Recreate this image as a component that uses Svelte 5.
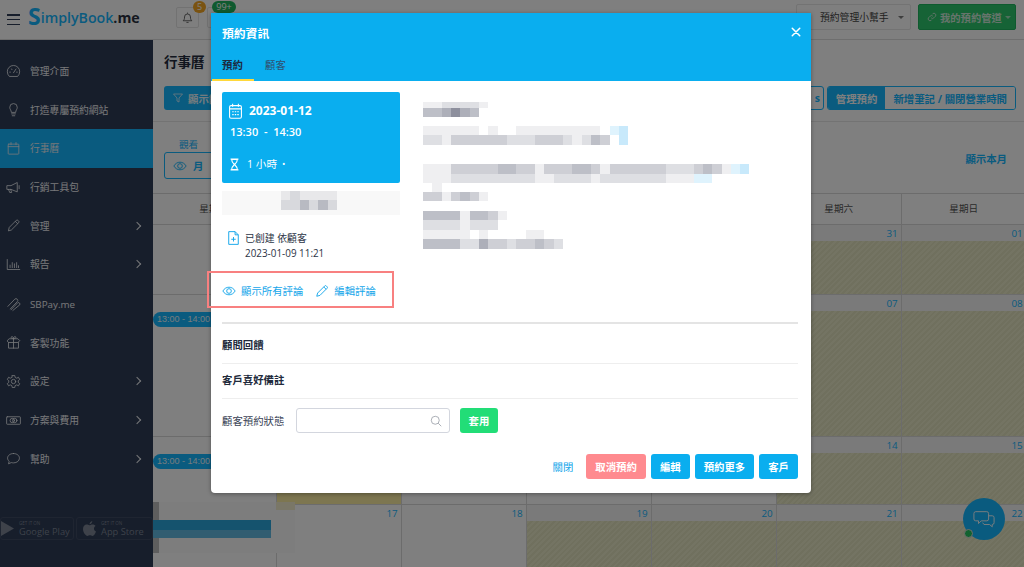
<script>
  const navItems = [
    { label: "管理介面", icon: "gauge" },
    { label: "打造專屬預約網站", icon: "bulb" },
    { label: "行事曆", icon: "calendar", active: true },
    { label: "行銷工具包", icon: "megaphone" },
    { label: "管理", icon: "pencil", more: true },
    { label: "報告", icon: "chart", more: true },
    { label: "SBPay.me", icon: "clip" },
    { label: "客製功能", icon: "gift" },
    { label: "設定", icon: "gear", more: true },
    { label: "方案與費用", icon: "money", more: true },
    { label: "幫助", icon: "chat", more: true },
  ];

  const weekdays = ["星期一", "星期二", "星期三", "星期四", "星期五", "星期六", "星期日"];

  const weeks = [
    { height: 70, days: ["26", "27", "28", "29", "30", "31", "01"], off: [5, 6] },
    { height: 142, days: ["02", "03", "04", "05", "06", "07", "08"], off: [5, 6], event: true },
    { height: 68, days: ["09", "10", "11", "12", "13", "14", "15"], off: [5, 6], event: true, today: 1 },
    { height: 70, days: ["16", "17", "18", "19", "20", "21", "22"], off: [3, 4, 5, 6], smudge: true },
  ];

  // blurred-out customer details, one digit per mosaic cell (b/c = light blue)
  const detailRows = [
    { h: 6, cells: "1122221" },
    { h: 9, cells: "4457540" },
    { h: 9, cells: "" },
    { h: 9, cells: "1111110100111111111" + "0bc" },
    { h: 10, cells: "221333333222333212" + "43" + "0c" },
    { h: 19, cells: "" },
    { h: 10, cells: "1113333344331333443" + "1333333222343" + "1bc" },
    { h: 9, cells: "111222222222112222" + "1222222211" + "1" + "bb" },
    { h: 9, cells: "01" },
    { h: 9, cells: "3313431" },
    { h: 10, cells: "" },
    { h: 9, cells: "444414431" },
    { h: 10, cells: "22221222" },
    { h: 9, cells: "1111101000011" },
    { h: 10, cells: "444422533233432" },
  ];

  const nameRows = [
    { h: 9, cells: "121111" },
    { h: 10, cells: "224242" },
  ];

  function cellColor(c) {
    if (c === "b") return "#dff3fd";
    if (c === "c") return "#c8e9fb";
    return `rgba(45, 50, 75, ${Number(c) * 0.078})`;
  }
</script>

{#snippet icon(name)}
  <svg class="nav-icon" viewBox="0 0 24 24" fill="none" stroke="currentColor" stroke-width="1.3" stroke-linecap="round" stroke-linejoin="round">
    {#if name === "gauge"}
      <path d="M5 19.5a10 10 0 1 1 14 0z" /><path d="M12 14l4-6" /><path d="M6 13h1M17 13h1M9 8l.5 1" />
    {:else if name === "bulb"}
      <path d="M8.5 16c0-3-2.5-4-2.5-7.500a6 6 0 0 1 12 0c0 3.500-2.500 4.500-2.500 7.500z" /><path d="M9 19h6M10 22h4" />
    {:else if name === "calendar"}
      <rect x="3.500" y="5" width="17" height="16" rx="1" /><path d="M3.500 9h17M8 2.500V6M16 2.500V6" />
    {:else if name === "megaphone"}
      <path d="M2 9h6l10-5v15L8 15H2z" /><path d="M4 15l2 5h3l-1.500-5M21 9v5" />
    {:else if name === "pencil"}
      <path d="M4 20l1.200-5L16.500 3.700a1.800 1.800 0 0 1 2.500 0l1.300 1.300a1.800 1.800 0 0 1 0 2.500L9 18.800z" /><path d="M15 5.500l3.500 3.500" />
    {:else if name === "chart"}
      <path d="M2 4v16h20" /><path d="M6.500 17v-4M10 17V9M13.500 17v-6M17 17v-8M20 17v-3" />
    {:else if name === "clip"}
      <path d="M3 15L14 3.500a2.800 2.800 0 0 1 4 4L7 19" /><path d="M8 20.500L19 9a2.500 2.500 0 0 1 3 3.500L11 21.500" />
    {:else if name === "gift"}
      <path d="M2 9l3-3h14l3 3-3 3H5z" /><path d="M4 12v9h16v-9M12 6v15" /><path d="M12 6C9 6 7.500 4.500 8.500 3s3.500 0 3.500 3c0-3 2.500-4.500 3.500-3s-.5 3-3.500 3z" />
    {:else if name === "gear"}
      <circle cx="12" cy="12" r="3.500" /><path d="M10 2.500h4l.6 3 2.600 1.200 2.700-1.500 2 3.500-2.300 2 0 2.700 2.300 2-2 3.500-2.700-1.500-2.600 1.200-.6 3h-4l-.6-3-2.600-1.200-2.700 1.500-2-3.500 2.300-2 0-2.700-2.300-2 2-3.500 2.700 1.500 2.600-1.200z" />
    {:else if name === "money"}
      <rect x="1" y="6" width="22" height="12" rx="1" /><circle cx="10" cy="12" r="3.500" /><circle cx="14" cy="12" r="3.500" />
    {:else}
      <path d="M12 4c5.500 0 9.500 3.300 9.500 7.500S17.500 19 12 19c-1.500 0-2.500-.2-3.500-.5L4 20.500l1-4C3.500 15 2.500 13.300 2.500 11.500 2.500 7.300 6.500 4 12 4z" />
    {/if}
  </svg>
{/snippet}

{#snippet mosaic(rows)}
  {#each rows as row}
    <div class="mosaic-row" style="height: {row.h}px">
      {#each row.cells.split("") as c}
        <span style="background: {cellColor(c)}"></span>
      {/each}
    </div>
  {/each}
{/snippet}

<div class="page">
  <header class="topbar">
    <button class="burger" type="button" aria-label="Menu"><span></span><span></span><span></span></button>
    <a class="logo" href="/"><b>S</b>implyBook<em>.me</em></a>
    <button class="bell" type="button" aria-label="Notifications">
      <svg viewBox="0 0 24 24" fill="none" stroke="currentColor" stroke-width="1.600"><path d="M4 18c2-2 2.500-3 2.500-7a5.500 5.500 0 0 1 11 0c0 4 .5 5 2.500 7z" /><path d="M10 21h4M12 3v2" /></svg>
      <i class="badge orange">5</i>
    </button>
    <button class="bell second" type="button" aria-label="Bookings"><i class="badge green">99+</i></button>
    <div class="top-right">
      <button class="helper" type="button">預約管理小幫手<i class="caret"></i></button>
      <button class="links" type="button">
        <svg viewBox="0 0 24 24" fill="none" stroke="currentColor" stroke-width="2"><path d="M10 14a4.500 4.500 0 0 0 6.500 0l4-4A4.500 4.500 0 0 0 14 4l-1.500 1.500M14 10a4.500 4.500 0 0 0-6.500 0l-4 4A4.500 4.500 0 0 0 10 20l1.500-1.500" /></svg>
        我的預約管道<i class="caret"></i>
      </button>
    </div>
  </header>

  <div class="shell">
    <aside class="sidebar">
      <nav>
        {#each navItems as item}
          <a class="nav-item" class:active={item.active} href="/">
            {@render icon(item.icon)}
            <span>{item.label}</span>
            {#if item.more}<i class="chev"></i>{/if}
          </a>
        {/each}
      </nav>
      <div class="stores">
        <div class="store play">
          <svg viewBox="0 0 14 16"><path d="M0 0l14 8-14 8z" fill="currentColor" /></svg>
          <div><small>GET IT ON</small><span>Google Play</span></div>
        </div>
        <div class="store apple">
          <svg viewBox="0 0 14 16"><path d="M10 0c0 2-1.500 3.500-3 3.500C7 2 8.500.3 10 0zM7 4.500c1 0 2-.8 3.500-.8 1.200 0 2.300.6 3 1.600-2.500 1.500-2 5 .5 6-.7 2-2.200 4.700-3.800 4.700-1 0-1.500-.6-2.700-.6s-1.800.6-2.700.6C2.800 16 0 12 0 8.500 0 5.500 2 3.800 3.800 3.800c1.300 0 2.300.7 3.200.7z" fill="currentColor" /></svg>
          <div><small>GET IT ON</small><span>App Store</span></div>
        </div>
      </div>
    </aside>

    <main class="main">
      <h1>行事曆</h1>
      <div class="toolbar">
        <button class="filter" type="button">
          <svg viewBox="0 0 24 24" fill="none" stroke="currentColor" stroke-width="1.500"><path d="M3 4h18l-7 8v8l-4-2v-6z" /></svg>
          顯示篩選
        </button>
        <div class="group">
          <button class="stub" type="button">s</button>
          <div class="segmented">
            <button class="seg on" type="button">管理預約</button>
            <button class="seg" type="button">新增筆記 / 關閉營業時間</button>
          </div>
        </div>
      </div>
      <div class="viewbar">
        <div class="view">
          <label for="view-mode">觀看</label>
          <button id="view-mode" type="button">
            <svg viewBox="0 0 24 24" fill="none" stroke="currentColor" stroke-width="1.600"><path d="M1.500 12C4 7.500 8 5.500 12 5.500s8 2 10.500 6.500c-2.500 4.500-6.500 6.500-10.500 6.500S4 16.500 1.500 12z" /><circle cx="12" cy="12" r="4" /></svg>
            月
          </button>
        </div>
        <a class="this-month" href="/">顯示本月</a>
      </div>

      <div class="calendar">
        <div class="week-head">
          {#each weekdays as day}<div>{day}</div>{/each}
        </div>
        {#each weeks as week}
          <div class="week" style="height: {week.height}px">
            {#each week.days as day, i}
              <div class="cell" class:off={week.off.includes(i)} class:today={week.today === i}>
                <div class="num">{day}</div>
                {#if week.event && i === 0}
                  <div class="event">13:00 - 14:00</div>
                {/if}
                {#if week.smudge && i === 0}
                  <div class="smudge">
                    <span class="smudge-edge"></span>
                    <span class="smudge-top"></span>
                    <span class="smudge-dark"></span>
                    <span class="smudge-light"></span>
                  </div>
                {/if}
              </div>
            {/each}
          </div>
        {/each}
      </div>
    </main>
  </div>

  <button class="chat-fab" type="button" aria-label="Chat">
    <svg viewBox="0 0 24 24" fill="none" stroke="currentColor" stroke-width="1"><path d="M3 4h12a2 2 0 0 1 2 2v6a2 2 0 0 1-2 2H9l-3 3v-3H3a2 2 0 0 1-2-2V6a2 2 0 0 1 2-2z" /><path d="M17 8.500h4a2 2 0 0 1 2 2V16a2 2 0 0 1-2 2v2.500L18 18h-6l-1.500-2" /></svg>
    <i></i>
  </button>

  <div class="backdrop"></div>

  <section class="modal">
    <div class="modal-head">
      <div class="modal-title">
        <span>預約資訊</span>
        <button type="button" class="close" aria-label="Close">
          <svg viewBox="0 0 12 12" stroke="currentColor" stroke-width="1.800" stroke-linecap="round"><path d="M1.500 1.500l9 9M10.500 1.500l-9 9" /></svg>
        </button>
      </div>
      <div class="tabs">
        <a class="tab current" href="/">預約</a>
        <a class="tab" href="/">顧客</a>
      </div>
    </div>

    <div class="modal-body">
      <div class="columns">
        <div class="col-left">
          <div class="when">
            <div class="when-date">
              <svg viewBox="3 1 18 22" fill="none" stroke="currentColor" stroke-width="1.500"><rect x="3.800" y="4.500" width="16.400" height="17.500" rx="2" /><path d="M3.500 9h17M8 2v4M16 2v4M7.500 13h2M11 13h2M14.500 13h2M7.500 17h2M11 17h2M14.500 17h2" /></svg>
              2023-01-12
            </div>
            <div class="when-time">13:30 &nbsp;-&nbsp; 14:30</div>
            <div class="when-length">
              <svg viewBox="4 1 16 22" fill="none" stroke="currentColor" stroke-width="2"><path d="M5 2.500h14M5 21.500h14M7 3c0 5 3 7 5 9-2 2-5 4-5 9h10c0-5-3-7-5-9 2-2 5-4 5-9z" /></svg>
              1 小時 <small>•</small>
            </div>
          </div>
          <div class="client-name">
            {@render mosaic(nameRows)}
          </div>
          <div class="created">
            <svg viewBox="4 1 17 22" fill="none" stroke="currentColor" stroke-width="1.500"><path d="M5 2h10l5 5v15H5z" /><path d="M15 2v5h5M12.500 10.500v7M9 14h7" /></svg>
            <div>
              <p>已創建 依顧客</p>
              <p>2023-01-09 11:21</p>
            </div>
          </div>
          <div class="comment-links">
            <a href="/">
              <svg viewBox="0 0 24 24" fill="none" stroke="currentColor" stroke-width="1.600"><path d="M1.500 12C4 7.500 8 5.500 12 5.500s8 2 10.500 6.500c-2.500 4.500-6.500 6.500-10.500 6.500S4 16.500 1.500 12z" /><circle cx="12" cy="12" r="4" /></svg>
              顯示所有評論
            </a>
            <a href="/">
              <svg viewBox="0 0 24 24" fill="none" stroke="currentColor" stroke-width="1.600"><path d="M3 21l1.500-5.500L16.500 3.500a2 2 0 0 1 3 0l1 1a2 2 0 0 1 0 3L8.500 19.500z" /><path d="M15 5l4 4" /></svg>
              編輯評論
            </a>
          </div>
        </div>
        <div class="col-right">
          {@render mosaic(detailRows)}
        </div>
      </div>

      <div class="section first">顧問回饋</div>
      <div class="section">客戶喜好備註</div>

      <div class="status">
        <span>顧客預約狀態</span>
        <div class="search">
          <svg viewBox="0 0 24 24" fill="none" stroke="currentColor" stroke-width="1.400"><circle cx="10.500" cy="10.500" r="8" /><path d="M16.500 16.500l6 6" /></svg>
        </div>
        <button type="button" class="apply">套用</button>
      </div>

      <div class="modal-foot">
        <a href="/">關閉</a>
        <button type="button" class="cancel">取消預約</button>
        <button type="button">編輯</button>
        <button type="button">預約更多</button>
        <button type="button">客戶</button>
      </div>
    </div>

    <div class="highlight"></div>
  </section>
</div>

<style>
  :global(body) {
    margin: 0;
    font-family: "Open Sans", "Noto Sans CJK TC", sans-serif;
  }

  button {
    font-family: inherit;
    cursor: pointer;
  }

  .page {
    position: relative;
    width: 1024px;
    height: 567px;
    overflow: hidden;
    display: flex;
    flex-direction: column;
    background: #fff;
    color: #2e3c56;
    font-size: 10.4px;
  }

  .topbar {
    height: 40px;
    flex: none;
    box-sizing: border-box;
    padding-left: 7px;
    display: flex;
    align-items: center;
    background: #fff;
    border-bottom: 1px solid #ddd;
  }

  .burger {
    width: 13px;
    height: 11px;
    padding: 0;
    border: none;
    background: none;
    display: flex;
    flex-direction: column;
    justify-content: space-between;
  }

  .burger span {
    display: block;
    height: 1.500px;
    background: #2e3c56;
  }

  .logo {
    width: 148px;
    margin-left: 8px;
    margin-top: -4px;
    color: #14b6ff;
    font-family: "Open Sans", sans-serif;
    font-size: 14.200px;
    font-weight: 600;
    text-decoration: none;
    white-space: nowrap;
  }

  .logo b {
    font-size: 23px;
    font-weight: 700;
    line-height: 0;
    vertical-align: -2px;
  }

  .logo em {
    color: #2a3040;
    font-style: normal;
    font-weight: 700;
  }

  .bell {
    position: relative;
    width: 23px;
    height: 21px;
    flex: none;
    padding: 3px;
    margin-top: -5px;
    box-sizing: border-box;
    border: 1px solid #e4e4e4;
    border-radius: 2px;
    background: #fff;
    color: #555;
  }

  .bell.second {
    margin-left: 8px;
  }

  .bell svg {
    display: block;
    width: 100%;
    height: 100%;
  }

  .badge {
    position: absolute;
    top: -7px;
    right: -8px;
    width: 13px;
    height: 12px;
    border-radius: 7px;
    color: #fff;
    font-size: 9px;
    font-style: normal;
    line-height: 12px;
    text-align: center;
  }

  .badge.orange {
    background: #f5a623;
  }

  .badge.green {
    right: auto;
    left: 4px;
    width: 24px;
    background: #1fb45f;
  }

  .top-right {
    margin-left: auto;
    margin-right: 8px;
    margin-top: -5px;
    display: flex;
    gap: 7px;
  }

  .helper,
  .links {
    height: 26px;
    box-sizing: border-box;
    display: flex;
    align-items: center;
    border-radius: 2px;
    font-size: 10.300px;
    white-space: nowrap;
  }

  .helper {
    width: 115px;
    padding: 0 0 0 23px;
    border: 1px solid #e6e6e6;
    background: #fff;
    color: #444;
    font-size: 9.800px;
  }

  .links {
    width: 98px;
    padding: 0 0 0 8px;
    border: 1px solid #1fb45f;
    background: #2dc76d;
    color: #cfe9d9;
    font-weight: 700;
  }

  .links svg {
    width: 10px;
    height: 10px;
    margin-right: 3px;
  }

  .caret {
    width: 0;
    height: 0;
    margin-left: 9px;
    border: 3px solid transparent;
    border-top-color: currentColor;
    border-bottom: none;
    opacity: 0.7;
  }

  .links .caret {
    margin-left: 3px;
  }

  .shell {
    flex: 1;
    min-height: 0;
    display: flex;
  }

  .sidebar {
    width: 153px;
    flex: none;
    display: flex;
    flex-direction: column;
    padding-top: 12px;
    box-sizing: border-box;
    background: #2e3c56;
    color: #eef0f4;
  }

  .nav-item {
    height: 38.600px;
    padding-left: 6px;
    display: flex;
    align-items: center;
    color: inherit;
    font-size: 9.800px;
    text-decoration: none;
  }

  /* the row after the reports entry sits a little lower */
  .nav-item:nth-child(7) {
    margin-top: 1.400px;
  }

  .nav-item.active {
    background: #14b6ff;
  }

  .nav-icon {
    width: 15px;
    height: 15px;
    flex: none;
    margin-right: 9px;
  }

  .nav-item span {
    flex: 1;
    white-space: nowrap;
  }

  .chev {
    width: 5px;
    height: 5px;
    margin-right: 13px;
    border-top: 1px solid currentColor;
    border-right: 1px solid currentColor;
    transform: rotate(45deg);
  }

  .stores {
    margin-top: auto;
    margin-bottom: 27px;
    display: flex;
    gap: 2px;
  }

  .store {
    height: 23px;
    box-sizing: border-box;
    display: flex;
    align-items: center;
    gap: 5px;
    border: 1px solid #3f4a63;
    border-radius: 3px;
    color: #7c8494;
    white-space: nowrap;
  }

  .store.play {
    width: 74px;
  }

  .store.apple {
    width: 77px;
    padding-left: 6px;
  }

  .store svg {
    width: 13px;
    height: 15px;
    flex: none;
  }

  .store div {
    display: flex;
    flex-direction: column;
  }

  .store small {
    font-size: 4.500px;
    line-height: 6px;
  }

  .store span {
    font-size: 9.300px;
    line-height: 11px;
  }

  .main {
    flex: 1;
    min-width: 0;
    background: #fff;
    overflow: hidden;
  }

  h1 {
    margin: 0;
    padding: 12px 0 0 11px;
    color: #222b3c;
    font-size: 13.500px;
    font-weight: 700;
    line-height: 20px;
  }

  .toolbar {
    height: 50px;
    box-sizing: border-box;
    padding: 14px 8px 0 11px;
    display: flex;
    justify-content: space-between;
    border-bottom: 1px solid #e6e6e6;
  }

  .filter {
    width: 70px;
    height: 24px;
    padding: 0 0 0 8px;
    display: flex;
    align-items: center;
    gap: 4px;
    border: none;
    border-radius: 3px;
    background: #14b6ff;
    color: #e9f7fd;
    font-size: 10.400px;
    font-weight: 700;
    white-space: nowrap;
  }

  .filter svg {
    width: 12px;
    height: 12px;
  }

  .group {
    display: flex;
    gap: 3px;
  }

  .stub {
    width: 30px;
    height: 24px;
    padding: 0 3px 0 0;
    border: 1px solid #14b6ff;
    border-radius: 3px;
    background: #fff;
    color: #14b6ff;
    font-size: 10.400px;
    font-weight: 700;
    text-align: right;
  }

  .segmented {
    display: flex;
    height: 24px;
    box-sizing: border-box;
    border: 1px solid #14b6ff;
    border-radius: 3px;
    overflow: hidden;
  }

  .seg {
    padding: 0 8px;
    border: none;
    background: #fff;
    color: #14b6ff;
    font-size: 10.400px;
    font-weight: 700;
    white-space: nowrap;
  }

  .seg.on {
    background: #14b6ff;
    color: #fff;
  }

  .viewbar {
    height: 71px;
    box-sizing: border-box;
    padding: 15px 17px 0 11px;
    display: flex;
    justify-content: space-between;
    align-items: flex-start;
  }

  .view {
    display: flex;
    flex-direction: column;
    align-items: flex-start;
    gap: 1px;
  }

  .view label {
    width: 49px;
    color: #14b6ff;
    font-size: 9.600px;
    text-align: center;
  }

  .view button {
    width: 70px;
    height: 27px;
    padding: 0 0 0 8px;
    display: flex;
    align-items: center;
    gap: 6px;
    border: 1px solid #14b6ff;
    border-radius: 3px;
    background: #fff;
    color: #14b6ff;
    font-size: 10.400px;
    font-weight: 700;
  }

  .view svg {
    width: 14px;
    height: 14px;
  }

  .this-month {
    margin-top: 14px;
    color: #14b6ff;
    font-size: 10.400px;
    font-weight: 700;
    text-decoration: none;
  }

  .calendar {
    margin-left: -1.300px;
    width: 875px;
    border-top: 1px solid #d8d8d8;
  }

  .week-head,
  .week {
    display: grid;
    grid-template-columns: repeat(7, 125px);
    box-sizing: border-box;
    border-bottom: 1px solid #d8d8d8;
  }

  .week-head {
    height: 31px;
  }

  .week-head div {
    border-right: 1px solid #d8d8d8;
    color: #555;
    font-size: 9.600px;
    line-height: 30px;
    text-align: center;
  }

  .cell {
    position: relative;
    box-sizing: border-box;
    border-right: 1px solid #d8d8d8;
    min-width: 0;
  }

  .cell.off {
    background: repeating-linear-gradient(135deg, #e9e9c6 0 2px, #e1e1bc 2px 4px);
  }

  .cell.today {
    background: #fbeca0;
  }

  .num {
    height: 16px;
    padding-right: 3px;
    background: #fff;
    color: #14b6ff;
    font-size: 9.800px;
    line-height: 17px;
    text-align: right;
  }

  .cell.off .num {
    background: #f4f4f4;
  }

  .cell.today .num {
    background: #fbeca0;
  }

  .event {
    margin-top: 1px;
    height: 15px;
    margin-left: 1.300px;
    padding-left: 4px;
    border-radius: 8px 0 0 8px;
    background: #14b6ff;
    color: #e8f6fd;
    font-family: "Liberation Sans", sans-serif;
    font-size: 9px;
    line-height: 15px;
    white-space: nowrap;
  }

  .smudge {
    position: absolute;
    z-index: 1;
    left: 1.300px;
    top: -3px;
    width: 142px;
    height: 51px;
    background: #fbfbfb;
  }

  .smudge span {
    position: absolute;
    left: 0;
  }

  .smudge-edge {
    top: 0;
    width: 6px;
    height: 51px;
    background: #bdbdbd;
  }

  .smudge .smudge-top {
    left: 123px;
    top: 0;
    width: 19px;
    height: 8px;
    background: #f4efce;
  }

  .smudge-dark {
    top: 18px;
    width: 118px;
    height: 10px;
    background: #2ba6dc;
  }

  .smudge-light {
    top: 28px;
    width: 118px;
    height: 8px;
    background: #62bbe2;
  }

  .chat-fab {
    position: absolute;
    left: 963px;
    top: 498px;
    width: 42px;
    height: 42px;
    padding: 10px;
    border: none;
    border-radius: 50%;
    background: #14b6ff;
    color: #fff;
  }

  .chat-fab svg {
    display: block;
    width: 100%;
    height: 100%;
  }

  .chat-fab i {
    position: absolute;
    left: 1px;
    bottom: 2px;
    width: 7px;
    height: 7px;
    border: 1px solid #ddd;
    border-radius: 50%;
    background: #22c55e;
  }

  .backdrop {
    position: absolute;
    z-index: 2;
    inset: 0;
    background: rgba(0, 0, 0, 0.5);
  }

  .modal {
    position: absolute;
    z-index: 3;
    left: 211px;
    top: 13px;
    width: 600px;
    height: 480px;
    border-radius: 0 0 4px 4px;
    background: #fff;
    box-shadow: 0 1px 4px rgba(0, 0, 0, 0.35);
    color: #2e3c56;
  }

  .modal-head {
    height: 68px;
    background: #0aaeef;
  }

  .modal-title {
    height: 40px;
    padding: 0 10px 2px 11px;
    box-sizing: border-box;
    display: flex;
    align-items: center;
    justify-content: space-between;
    color: #fff;
    font-size: 11.800px;
    font-weight: 700;
  }

  .close {
    width: 10px;
    height: 10px;
    padding: 0;
    border: none;
    background: none;
    color: #fff;
  }

  .close svg {
    display: block;
  }

  .tabs {
    height: 28px;
    display: flex;
  }

  .tab {
    height: 28px;
    box-sizing: border-box;
    padding: 5px 10px 0 11px;
    color: #30506f;
    font-size: 10.400px;
    line-height: 14px;
    text-decoration: none;
  }

  .tab.current {
    width: 42px;
    margin-left: 1px;
    padding-left: 10px;
    border-bottom: 2px solid #ffd83b;
    color: #1d2a3f;
    font-weight: 700;
  }

  .modal-body {
    padding: 11px 13px 0 11px;
  }

  .columns {
    height: 230px;
    display: flex;
    gap: 23px;
    border-bottom: 2px solid #e4e4e4;
  }

  .col-left {
    width: 178px;
    flex: none;
  }

  .col-right {
    flex: 1;
    padding-top: 10px;
    min-width: 0;
  }

  .mosaic-row {
    display: flex;
  }

  .mosaic-row span {
    width: 9.340px;
    flex: none;
  }

  .when {
    height: 91px;
    box-sizing: border-box;
    padding: 10px 8px 0 7px;
    border-radius: 2px;
    background: #0aaeef;
    color: #fff;
  }

  .when-date {
    display: flex;
    align-items: center;
    gap: 7px;
    font-size: 12px;
    font-weight: 700;
    line-height: 18px;
  }

  .when-date svg {
    width: 13px;
    height: 16px;
  }

  .when-time {
    margin-top: 4px;
    margin-left: 1px;
    font-size: 11px;
    font-weight: 600;
    line-height: 16px;
  }

  .when-length {
    margin-top: 17px;
    margin-left: 1px;
    display: flex;
    align-items: center;
    gap: 8px;
    font-size: 10.600px;
    line-height: 14px;
  }

  .when-length svg {
    width: 9px;
    height: 13px;
  }

  .when-length small {
    font-size: 9px;
    margin-left: -3px;
  }

  .client-name {
    margin-top: 8px;
    height: 24px;
    padding-left: 59px;
    background: #f8f8f8;
  }

  .created {
    margin-top: 16px;
    padding-left: 6px;
    display: flex;
    gap: 6px;
    color: #2b3446;
  }

  .created svg {
    width: 11px;
    height: 14px;
    flex: none;
    color: #14a6ea;
  }

  .created p {
    margin: 0;
    font-size: 9.900px;
    line-height: 15px;
    white-space: nowrap;
  }

  .comment-links {
    margin-top: 23px;
    display: flex;
    gap: 12px;
  }

  .comment-links a {
    display: flex;
    align-items: center;
    gap: 5px;
    color: #14a6ea;
    font-size: 10.400px;
    line-height: 14px;
    text-decoration: none;
    white-space: nowrap;
  }

  .comment-links svg {
    width: 14px;
    height: 14px;
    flex: none;
  }

  .section {
    height: 35px;
    box-sizing: border-box;
    border-bottom: 1px solid #eee;
    color: #222b3c;
    font-size: 10.400px;
    font-weight: 700;
    line-height: 33px;
  }

  .section.first {
    height: 40px;
    line-height: 42px;
  }

  .status {
    margin-top: 9px;
    height: 25px;
    display: flex;
    align-items: center;
    font-size: 10.400px;
  }

  .status > span {
    width: 74px;
    color: #3a4356;
  }

  .search {
    width: 154px;
    height: 25px;
    box-sizing: border-box;
    padding-right: 7px;
    display: flex;
    align-items: center;
    justify-content: flex-end;
    border: 1px solid #d3d6de;
    border-radius: 3px;
    color: #8a8f99;
  }

  .search svg {
    width: 12px;
    height: 12px;
  }

  .apply {
    width: 38px;
    height: 25px;
    margin-left: 10px;
    padding: 0;
    border: none;
    border-radius: 3px;
    background: #22dd77;
    color: #fff;
    font-size: 10.400px;
    font-weight: 700;
  }

  .modal-foot {
    margin-top: 21px;
    display: flex;
    justify-content: flex-end;
    align-items: center;
    gap: 5px;
  }

  .modal-foot a {
    margin-right: 8px;
    color: #14a6ea;
    font-size: 10.400px;
    text-decoration: none;
  }

  .modal-foot button {
    height: 25px;
    padding: 0 9px;
    border: none;
    border-radius: 3px;
    background: #0aaeef;
    color: #fff;
    font-size: 10.400px;
    font-weight: 700;
    white-space: nowrap;
  }

  .modal-foot .cancel {
    background: #ff8a8f;
  }

  .highlight {
    position: absolute;
    left: -4px;
    top: 258px;
    width: 187px;
    height: 37px;
    box-sizing: border-box;
    border: 2px solid #f88080;
    pointer-events: none;
  }
</style>
